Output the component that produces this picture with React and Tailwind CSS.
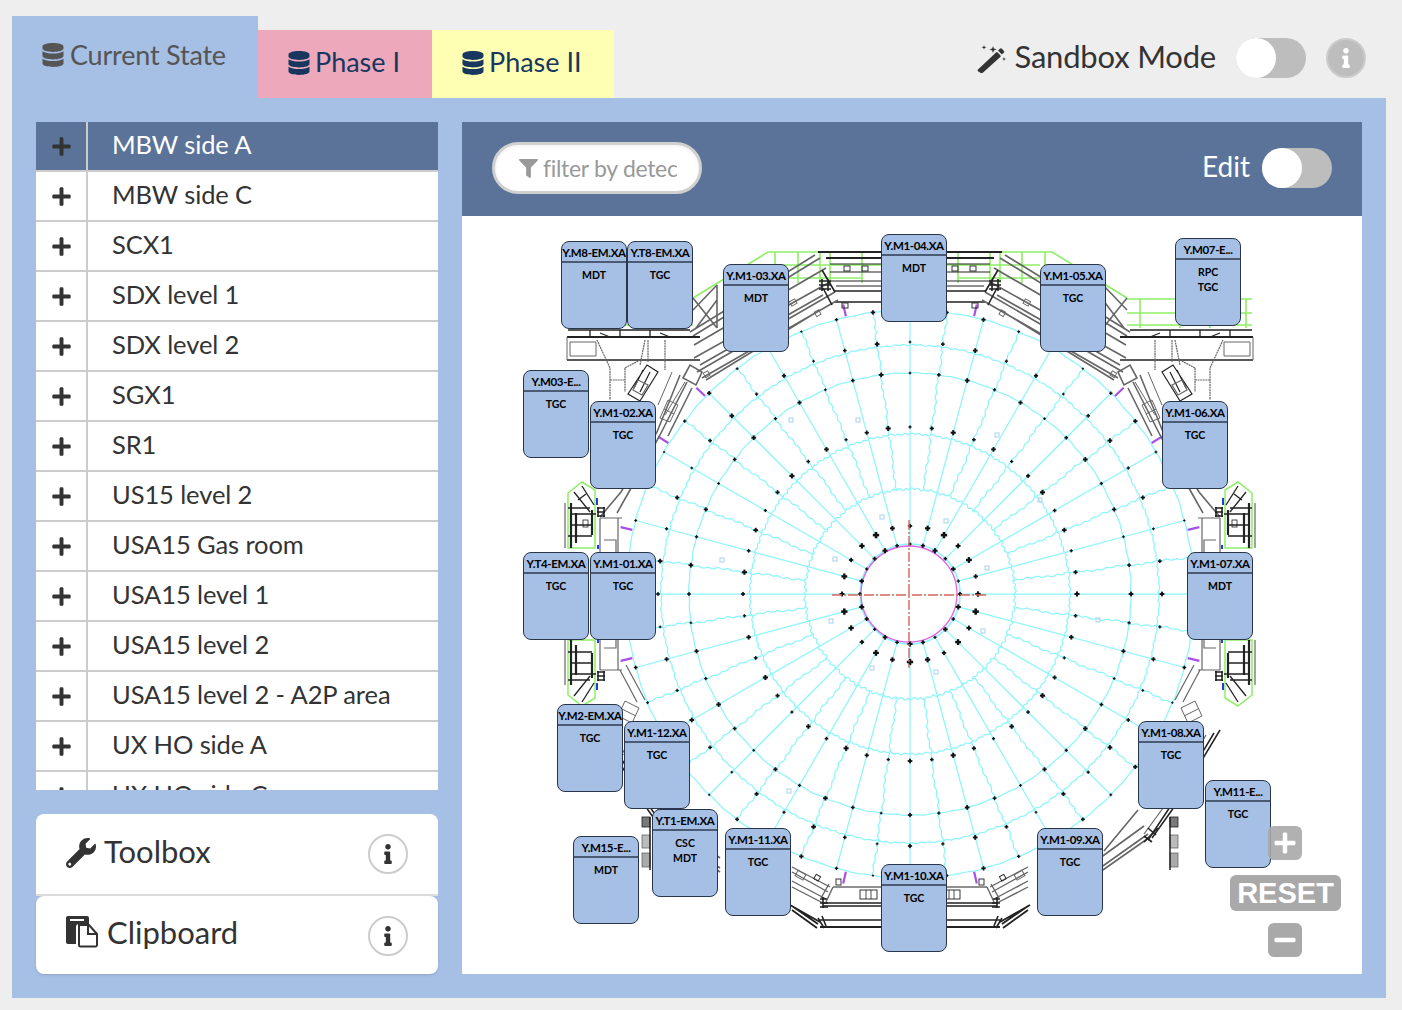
import { FaDatabase, FaPlus, FaWrench, FaInfo, FaFilter, FaMinus } from "react-icons/fa";

const rooms = [
  "MBW side A", "MBW side C", "SCX1", "SDX level 1", "SDX level 2", "SGX1", "SR1", "US15 level 2",
  "USA15 Gas room", "USA15 level 1", "USA15 level 2", "USA15 level 2 - A2P area", "UX HO side A", "UX HO side C",
];

const nodes = [
  { x: 561, y: 242, name: "Y.M8-EM.XA", lines: ["MDT"] },
  { x: 627, y: 242, name: "Y.T8-EM.XA", lines: ["TGC"] },
  { x: 723, y: 265, name: "Y.M1-03.XA", lines: ["MDT"] },
  { x: 881, y: 235, name: "Y.M1-04.XA", lines: ["MDT"] },
  { x: 1040, y: 265, name: "Y.M1-05.XA", lines: ["TGC"] },
  { x: 1175, y: 239, name: "Y.M07-E...", lines: ["RPC", "TGC"] },
  { x: 523, y: 371, name: "Y.M03-E...", lines: ["TGC"] },
  { x: 590, y: 402, name: "Y.M1-02.XA", lines: ["TGC"] },
  { x: 1162, y: 402, name: "Y.M1-06.XA", lines: ["TGC"] },
  { x: 523, y: 553, name: "Y.T4-EM.XA", lines: ["TGC"] },
  { x: 590, y: 553, name: "Y.M1-01.XA", lines: ["TGC"] },
  { x: 1187, y: 553, name: "Y.M1-07.XA", lines: ["MDT"] },
  { x: 557, y: 705, name: "Y.M2-EM.XA", lines: ["TGC"] },
  { x: 624, y: 722, name: "Y.M1-12.XA", lines: ["TGC"] },
  { x: 1138, y: 722, name: "Y.M1-08.XA", lines: ["TGC"] },
  { x: 1205, y: 781, name: "Y.M11-E...", lines: ["TGC"] },
  { x: 652, y: 810, name: "Y.T1-EM.XA", lines: ["CSC", "MDT"] },
  { x: 573, y: 837, name: "Y.M15-E...", lines: ["MDT"] },
  { x: 725, y: 829, name: "Y.M1-11.XA", lines: ["TGC"] },
  { x: 1037, y: 829, name: "Y.M1-09.XA", lines: ["TGC"] },
  { x: 881, y: 865, name: "Y.M1-10.XA", lines: ["TGC"] },
];

const CX = 910;
const CY = 594;
const range = (from, to, step) => {
  const out = [];
  for (let v = from; v <= to + 0.001; v += step) out.push(v);
  return out;
};
const polar = (r, deg) => {
  const a = (deg * Math.PI) / 180;
  return [CX + r * Math.sin(a), CY - r * Math.cos(a)];
};
const toPath = (pts, close) =>
  "M" + pts.map((p) => p[0].toFixed(1) + " " + p[1].toFixed(1)).join("L") + (close ? "Z" : "");

const wavyRing = (r, amp, period) =>
  toPath(
    range(0, 359.5, 0.5).map((d) => {
      const wave = Math.sin((d / period) * 2 * Math.PI) + 0.6 * Math.sin((d / (period * 2.7)) * 2 * Math.PI);
      return polar(r + amp * wave, d);
    }),
    true
  );

const wavySpoke = (deg, r0, r1, amp) =>
  toPath(range(r0, r1, 1.5).map((r) => polar(r, deg + ((amp * (Math.sin(r / 1.6) + Math.sin(r / 7))) / r) * 57)));

const spokes = [
  ...range(0, 345, 15).map((d) => toPath([polar(68, d), polar(284, d)])),
  ...range(7.5, 352.5, 15).map((d) => wavySpoke(d, 160, 284, 0.7)),
  ...range(7.5, 352.5, 15).map((d) => wavySpoke(d, 105, 160, 0.7)),
  ...range(0, 345, 15).map((d) => toPath([polar(50, d), polar(68, d)])),
];

const rings = [
  wavyRing(105, 0.9, 3.5),
  wavyRing(160, 0.7, 2.5),
  wavyRing(221, 0.3, 5),
  wavyRing(249, 0.6, 2),
  wavyRing(284, 0.3, 5),
];

const ringDots = (r, step, base) =>
  range(0, 359.9, step).map((d, i) => [...polar(r, d), base + ((i * 7) % 5) * 0.12]);

const dots = [
  ...ringDots(167, 7.5, 0.8),
  ...ringDots(221, 7.5, 0.7),
  ...ringDots(252, 7.5, 0.7),
  ...ringDots(284, 7.5, 0.6),
  ...ringDots(68, 15, 1.1),
  ...ringDots(50, 15, 0.8),
];

const paleMarks = [
  [882, 517], [946, 521], [835, 559], [987, 568], [831, 621], [983, 631], [872, 668], [936, 672],
  [858, 420], [997, 435], [791, 420], [1040, 500], [789, 791], [722, 560], [1098, 620],
];

const magentaMarks = [13, 46, 58, 77, 103, 122, 167, 193, 238, 257, 283, 302, 314, 347];

const GREEN = "#8fee66";
const DARK = "#222222";
const MID = "#666666";
const LIGHT = "#999999";

function TopQuarter() {
  return (
    <g fill="none">
      <path
        d="M693 298L768 252H910M780 265H910M775 252V283M798 252V283M820 252V283M830 252V283M862 252V283M780 278H862M568 299H693M568 313H693M568 325H693M574 299V328M610 299V328M640 299V328M680 299V328"
        stroke={GREEN}
        strokeWidth="1.6"
      />
      <path d="M818 252H910M826 258H910" stroke={DARK} strokeWidth="2" />
      <path d="M835 291H910M835 302H910" stroke={DARK} strokeWidth="1.5" />
      <path d="M830 264H910M830 272H910M830 281H910M836 286H910" stroke={DARK} strokeWidth="1" />
      <path
        d="M815 255L690 332M820 258L693 336M826 268L694 345M830 282L694 358M835 292L697 372M838 300L702 378M823 295L700 365M820 310L706 380"
        stroke={MID}
        strokeWidth="1.7"
      />
      <path d="M717 285V328M693 298L717 328M717 300L696 328M693 310L717 285" stroke={MID} strokeWidth="1.6" />
      <path d="M822 270L835 292M823 288L832 305M819 281H831M819 285H831M819 289H831M822 279V291M828 279V291" stroke={DARK} strokeWidth="1.6" />
      <rect x="844" y="266" width="6" height="5" stroke={DARK} strokeWidth="0.9" />
      <rect x="862" y="266" width="6" height="5" stroke={DARK} strokeWidth="0.9" />
      <rect x="842" y="303" width="6" height="5" stroke={DARK} strokeWidth="0.9" />
      <rect x="790" y="300" width="6" height="5" stroke={MID} strokeWidth="0.9" transform="rotate(-30 793 302)" />
      <rect x="815" y="311" width="5" height="5" stroke={MID} strokeWidth="0.9" transform="rotate(-30 817 313)" />
      <rect x="704" y="372" width="5" height="5" stroke={MID} strokeWidth="0.9" transform="rotate(-30 706 374)" />
      <path d="M567 337H700" stroke={DARK} strokeWidth="1.8" />
      <path d="M567 360H700" stroke={DARK} strokeWidth="1.5" />
      <path d="M567 337V360M570 342H596V356H570Z" stroke={MID} strokeWidth="1" />
      <path
        d="M597 340L610 368V400M645 340L640 365M625 368V392M625 368L640 360M665 340V370M648 340V362M610 380H625"
        stroke={MID}
        strokeWidth="1.2"
        strokeDasharray="2 0.6"
      />
      <path d="M568 330H690M590 330V337M620 330V337M650 330V337M600 333L610 337M660 333L670 337" stroke={DARK} strokeWidth="1.3" />
      <path d="M647 365L628 394L640 401L658 372ZM643 370L634 388M650 372L640 392" stroke={DARK} strokeWidth="1.2" />
      <path d="M633 390L642 395L648 385L638 380Z" stroke={MID} strokeWidth="1.2" />
      <path d="M658 405L672 372M665 415L685 382" stroke={MID} strokeWidth="1" />
      <path d="M683 378L690 365L702 372L696 385Z" stroke={MID} strokeWidth="1.6" />
      <path d="M687 382L660 435L630 490L617 513M680 375L657 432L621 492L600 517M692 388L668 436" stroke={MID} strokeWidth="1.6" />
      <path d="M668 400L660 418L670 422L678 405ZM664 409L674 414" stroke={MID} strokeWidth="1" />
      <path d="M568 493L582 482L595 490V548H568Z" stroke={GREEN} strokeWidth="1.5" />
      <path d="M565 503V548M618 518V553M600 518V553M600 518H622M604 540H616V552" stroke={MID} strokeWidth="1.2" />
      <path d="M571 503V548M576 513V543M592 510V535" stroke={DARK} strokeWidth="2.2" />
      <path d="M568 508H590M570 525H592M574 492L590 512M582 486L594 505M568 536H592M578 500L586 494M570 514H596" stroke={DARK} strokeWidth="1.3" />
      <rect x="583" y="520" width="5" height="7" stroke={DARK} strokeWidth="0.8" />
      <path d="M597 508H605M597 512H605M597 516H605M598 507V517M604 507V517" stroke={DARK} strokeWidth="1.6" />
      <path d="M597 498V505M598 545V549" stroke="#2438e8" strokeWidth="2" />
    </g>
  );
}

function BottomQuarter() {
  return (
    <g fill="none">
      <path d="M833 887H910" stroke={DARK} strokeWidth="1.2" />
      <path d="M823 903H910M823 906H910M820 920H910" stroke={DARK} strokeWidth="1.3" />
      <path d="M820 927H910" stroke={DARK} strokeWidth="2.2" />
      <path d="M792 867L830 887M792 887L823 903M792 881L826 899M792 872L828 892" stroke={MID} strokeWidth="1.4" />
      <path d="M792 910L817 928M790 905L820 922M792 906L818 924" stroke={DARK} strokeWidth="1.8" />
      <path d="M820 899H828M820 903H828M820 907H828M823 897V908M818 918L824 928M822 916L826 926" stroke={DARK} strokeWidth="1.6" />
      <rect x="860" y="890" width="17" height="9" stroke={DARK} strokeWidth="0.9" />
      <path d="M866 890V899M871 890V899" stroke={DARK} strokeWidth="0.8" />
      <rect x="796" y="872" width="9" height="6" stroke={MID} strokeWidth="1" transform="rotate(30 800 875)" />
      <rect x="815" y="875" width="5" height="5" stroke={DARK} strokeWidth="0.9" transform="rotate(30 817 877)" />
      <rect x="836" y="879" width="5" height="6" stroke={DARK} strokeWidth="0.9" />
      <path d="M833 887L826 902M829 884L821 898" stroke={MID} strokeWidth="1.4" />
      <path d="M720 872L670 837M720 868L672 834M720 858L676 826M716 851L682 810" stroke={MID} strokeWidth="1.6" />
      <path d="M668 838L648 810L600 730M672 840L652 810L606 733" stroke={DARK} strokeWidth="1.5" />
      <path d="M676 834L654 804L614 735M645 700L626 665M637 702L620 670" stroke={MID} strokeWidth="1.2" />
      <path d="M625 701L618 716L632 723L639 708ZM622 709L636 716" stroke={MID} strokeWidth="1" />
      <path d="M664 835L672 828M668 842L676 836M662 828L676 842" stroke={DARK} strokeWidth="1.6" />
      <rect x="642" y="817" width="8" height="10" fill="#7a7a7a" stroke={DARK} strokeWidth="0.8" />
      <rect x="642" y="835" width="8" height="13" fill="#bbbbbb" stroke={MID} strokeWidth="0.8" />
      <rect x="642" y="853" width="8" height="14" fill="#aaaaaa" stroke={MID} strokeWidth="0.8" />
      <path d="M650 817V870" stroke={DARK} strokeWidth="1.5" />
      <path d="M568 695L582 706L595 698V640H568Z" stroke={GREEN} strokeWidth="1.5" />
      <path d="M565 685V640M618 670V635M600 670V635M600 670H622M604 648H616V636" stroke={MID} strokeWidth="1.2" />
      <path d="M571 685V640M576 675V645M592 678V653" stroke={DARK} strokeWidth="2.2" />
      <path d="M568 680H590M570 663H592M574 696L590 676M568 652H592M582 702L594 683M570 674H596" stroke={DARK} strokeWidth="1.3" />
      <path d="M597 672H605M597 676H605M597 680H605M598 671V681M604 671V681" stroke={DARK} strokeWidth="1.6" />
      <path d="M597 683V690M598 639V643" stroke="#2438e8" strokeWidth="2" />
      <path d="M640 745L632 760L620 752" stroke={LIGHT} strokeWidth="1" />
    </g>
  );
}

function DetectorDrawing() {
  return (
    <svg viewBox="462 216 900 758" className="absolute inset-0 w-[900px] h-[758px]">
      <g fill="none" stroke="#8cf5fb" strokeWidth="1.25">
        {rings.map((d, i) => (
          <path key={i} d={d} />
        ))}
        {spokes.map((d, i) => (
          <path key={i} d={d} />
        ))}
        <circle cx={CX} cy={CY} r="50" strokeWidth="1.6" />
      </g>
      <circle cx={CX - 1} cy={CY} r="48" fill="none" stroke="#e060e8" strokeWidth="1.3" />
      <g fill="none" stroke="#b8d8f0" strokeWidth="1.2">
        {paleMarks.map((p, i) => (
          <rect key={i} x={p[0] - 2} y={p[1] - 2} width="4" height="4" />
        ))}
      </g>
      <g stroke="#a84fe8" strokeWidth="2.2">
        {magentaMarks.map((d) => {
          const a = polar(285, d);
          const b = polar(297, d);
          return <line key={d} x1={a[0]} y1={a[1]} x2={b[0]} y2={b[1]} />;
        })}
      </g>
      <g fill="#111111">
        {dots.map((p, i) => (
          <g key={i}>
            <rect x={p[0] - 2 * p[2]} y={p[1] - 0.8 * p[2]} width={4 * p[2]} height={1.6 * p[2]} />
            <rect x={p[0] - 0.8 * p[2]} y={p[1] - 2 * p[2]} width={1.6 * p[2]} height={4 * p[2]} />
          </g>
        ))}
      </g>
      <g fill="none" stroke="#d6665e" strokeWidth="1.4" strokeDasharray="10 2 2 2">
        <line x1="832" y1={CY + 1} x2="986" y2={CY + 1} />
        <line x1="909" y1="520" x2="909" y2="668" />
      </g>
      <TopQuarter />
      <g transform="matrix(-1 0 0 1 1820 0)">
        <TopQuarter />
      </g>
      <BottomQuarter />
      <g transform="matrix(-1 0 0 1 1820 0)">
        <BottomQuarter />
      </g>
    </svg>
  );
}

function Node({ node }) {
  return (
    <div
      className="absolute w-[66px] h-[88px] bg-[#a5bfe5] border-[1.5px] border-[#28354a] rounded-lg overflow-hidden text-center text-black font-bold font-['Lato']"
      style={{ left: node.x - 462, top: node.y - 217 }}
    >
      <div className="h-[21px] leading-[22px] text-[11.5px] tracking-[-0.35px] whitespace-nowrap border-b-2 border-[#4b5b73]">
        {node.name}
      </div>
      <div className="pt-[5px] text-[10.5px] leading-[15px]">
        {node.lines.map((l) => (
          <div key={l}>{l}</div>
        ))}
      </div>
    </div>
  );
}

function Toggle() {
  return (
    <div className="w-[70px] h-10 rounded-full bg-[#bdbdbd]">
      <div className="w-10 h-10 rounded-full bg-white" />
    </div>
  );
}

function InfoButton() {
  return (
    <div className="w-10 h-10 rounded-full border-2 border-[#cccccc] bg-white flex items-center justify-center text-[#333333] text-[20px]">
      <FaInfo />
    </div>
  );
}

function WandIcon() {
  return (
    <svg viewBox="0 0 30 30" className="w-[30px] h-[30px] text-[#333333]" fill="currentColor">
      <path d="M1 26.5L19 9.5a1.2 1.2 0 0 1 1.7 0l2.6 2.8a1.2 1.2 0 0 1 0 1.7L5.5 30a1.2 1.2 0 0 1-1.7 0L1 28.2a1.2 1.2 0 0 1 0-1.7Z" />
      <path d="M21 7.5l2.2-2a1 1 0 0 1 1.4 0l2.4 2.6a1 1 0 0 1 0 1.4L24.8 11.6Z" />
      <path d="M16 3l.9 2.6 2.6.9-2.6.9-.9 2.6-.9-2.6-2.6-.9 2.6-.9Z" />
      <path d="M7 2l.6 1.8 1.8.6-1.8.6L7 6.8l-.6-1.8-1.8-.6 1.8-.6Z" />
      <path d="M27 14l.5 1.5 1.5.5-1.5.5-.5 1.5-.5-1.5-1.5-.5 1.5-.5Z" />
    </svg>
  );
}

function ClipboardIcon() {
  return (
    <svg viewBox="0 0 32 32" className="w-8 h-8 text-[#333333]">
      <path
        fill="currentColor"
        d="M2 0h19a2 2 0 0 1 2 2v6H13a3 3 0 0 0-3 3v17H2a2 2 0 0 1-2-2V2a2 2 0 0 1 2-2Z"
      />
      <path fill="white" d="M4 3h14v2H4Z" />
      <path
        fill="white"
        stroke="currentColor"
        strokeWidth="2"
        d="M13 9h10l8 9v11a1.5 1.5 0 0 1-1.5 1.5h-15A1.5 1.5 0 0 1 13 29Z"
      />
      <path fill="none" stroke="currentColor" strokeWidth="2" d="M22 9v9h9" />
    </svg>
  );
}

export default function App() {
  return (
    <div className="w-[1402px] h-[1010px] bg-[#eeeeee] pt-4 pl-3 font-['Lato'] overflow-hidden">
      <div className="flex w-[1374px] h-[82px] items-end">
        <div className="w-[246px] h-[82px] bg-[#a5bfe5] pl-[29px] pt-[23px] flex items-start gap-[5px] text-[#555555] text-[27px] leading-[32px]">
          <FaDatabase className="text-[24px] mt-[4px]" />
          <span className="tracking-[-0.2px]">Current State</span>
        </div>
        <div className="w-[174px] h-[68px] bg-[#eea8bc] pl-[29px] pt-[16px] flex items-start gap-1 text-[#17375e] text-[27px] leading-[32px]">
          <FaDatabase className="text-[24px] mt-[5px]" />
          <span>Phase I</span>
        </div>
        <div className="w-[182px] h-[68px] bg-[#ffffb3] pl-[29px] pt-[16px] flex items-start gap-1 text-[#17375e] text-[27px] leading-[32px]">
          <FaDatabase className="text-[24px] mt-[5px]" />
          <span>Phase II</span>
        </div>
        <div className="ml-auto h-[82px] flex items-center pr-5 pt-[2px]">
          <WandIcon />
          <span className="ml-2 text-[31px] text-[#333333] tracking-[-0.2px] mt-[-4px]">Sandbox Mode</span>
          <div className="ml-5">
            <Toggle />
          </div>
          <div className="ml-5 w-10 h-10 rounded-full border-2 border-[#cccccc] bg-[#bdbdbd] flex items-center justify-center text-white text-[20px]">
            <FaInfo />
          </div>
        </div>
      </div>

      <div className="flex gap-6 w-[1374px] h-[900px] bg-[#a5bfe5] p-6">
        <div className="w-[402px] flex flex-col">
          <div className="h-[668px] overflow-hidden bg-white">
            {rooms.map((room, i) => (
              <div
                key={room}
                className={
                  i === 0
                    ? "flex h-[50px] border-b-2 border-[#cccccc] bg-[#5b7399] text-white"
                    : "flex h-[50px] border-b-2 border-[#cccccc] text-[#333333]"
                }
              >
                <div className="w-[52px] shrink-0 border-r-2 border-[#cccccc] flex items-center justify-center text-[#333333] text-[21px]">
                  <FaPlus />
                </div>
                <div className="pl-6 text-[25.5px] leading-[44px] tracking-[-0.1px] whitespace-nowrap">{room}</div>
              </div>
            ))}
          </div>
          <div className="mt-6 h-[160px] flex flex-col">
            <div className="h-[82px] bg-white rounded-t-lg border-b-2 border-[#dddddd] flex items-center pl-[30px] pr-[30px] text-[#333333]">
              <FaWrench className="text-[30px] mt-[-2px]" />
              <span className="ml-2 text-[31px] mt-[-6px]">Toolbox</span>
              <div className="ml-auto">
                <InfoButton />
              </div>
            </div>
            <div className="h-[78px] bg-white rounded-lg flex items-center pl-[30px] pr-[30px] text-[#333333] shadow-sm">
              <div className="mt-[-6px]">
                <ClipboardIcon />
              </div>
              <span className="ml-[9px] text-[31px] mt-[-6px]">Clipboard</span>
              <div className="ml-auto mt-[2px]">
                <InfoButton />
              </div>
            </div>
          </div>
        </div>

        <div className="w-[900px] flex flex-col bg-white">
          <div className="h-[94px] bg-[#5b7399] flex items-center pl-[30px] pr-[30px] pb-[2px]">
            <div className="w-[210px] h-[52px] rounded-full bg-white border-[3px] border-[#d0d0d0] flex items-center pl-[24px] shadow-inner">
              <FaFilter className="text-[19px] text-[#999999] shrink-0" />
              <input
                readOnly
                placeholder="filter by detector"
                className="ml-[5px] w-[134px] bg-transparent outline-none text-[23px] tracking-[-0.3px] placeholder:text-[#999999]"
              />
            </div>
            <span className="ml-auto text-white text-[28px] mt-[-4px]">Edit</span>
            <div className="ml-3">
              <Toggle />
            </div>
          </div>
          <div className="relative flex-1">
            <DetectorDrawing />
            {nodes.map((n) => (
              <Node key={n.name} node={n} />
            ))}
            <div className="absolute left-[806px] top-[610px] w-[34px] h-[34px] rounded-md bg-[#a9a9a9]/90 flex items-center justify-center text-white text-[24px]">
              <FaPlus />
            </div>
            <div className="absolute left-[768px] top-[659px] w-[111px] h-[36px] rounded-md bg-[#a9a9a9] text-white text-center text-[29px] leading-[36px] font-bold font-['Liberation_Sans']">
              RESET
            </div>
            <div className="absolute left-[806px] top-[707px] w-[34px] h-[34px] rounded-md bg-[#a9a9a9] flex items-center justify-center text-white text-[24px]">
              <FaMinus />
            </div>
          </div>
        </div>
      </div>
    </div>
  );
}
